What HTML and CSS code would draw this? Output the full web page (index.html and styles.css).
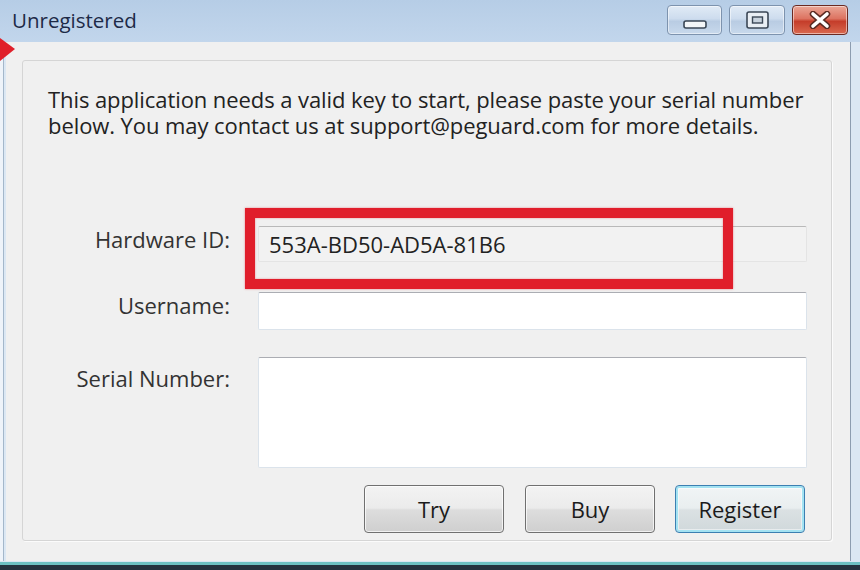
FILE: index.html
```html
<!DOCTYPE html>
<html lang="en">
<head>
  <meta charset="UTF-8">
  <meta name="viewport" content="width=device-width, initial-scale=1.0">
  <title>Unregistered</title>
  <link rel="stylesheet" href="styles.css">
</head>
<body>
  <div class="window">
    <div class="titlebar">
      <span class="title">Unregistered</span>
      <div class="caption-buttons">
        <button class="cap-btn min" aria-label="Minimize">
          <svg width="24" height="9" viewBox="0 0 24 9"><rect x="1" y="1" width="22" height="7" rx="2" fill="#f4f6f8" stroke="#3b4756" stroke-width="1.6"/></svg>
        </button>
        <button class="cap-btn max" aria-label="Maximize">
          <svg width="23" height="18" viewBox="0 0 23 18"><rect x="1" y="1" width="21" height="16" rx="2" fill="#e9eef4" stroke="#3b4756" stroke-width="1.6"/><rect x="6.5" y="6" width="10" height="6" fill="#c9d3de" stroke="#3b4756" stroke-width="1.4"/></svg>
        </button>
        <button class="cap-btn close" aria-label="Close">
          <svg width="22" height="18" viewBox="0 0 22 18"><path d="M4 3 L18 15 M18 3 L4 15" stroke="#5a2a22" stroke-width="6.5" stroke-linecap="round"/><path d="M4 3 L18 15 M18 3 L4 15" stroke="#ffffff" stroke-width="3.6" stroke-linecap="round"/></svg>
        </button>
      </div>
    </div>

    <div class="frame">
      <div class="client">
        <div class="panel">
          <p class="message">This application needs a valid key to start, please paste your serial number below. You may contact us at support@peguard.com for more details.</p>

          <div class="form">
            <div class="row">
              <label class="label">Hardware ID:</label>
              <div class="field readonly">553A-BD50-AD5A-81B6</div>
            </div>
            <div class="row">
              <label class="label" for="username">Username:</label>
              <input class="field input" id="username" type="text">
            </div>
            <div class="row">
              <label class="label serial-label" for="serial">Serial Number:</label>
              <textarea class="field serial" id="serial"></textarea>
            </div>
          </div>

          <div class="actions">
            <button class="btn btn-try">Try</button>
            <button class="btn">Buy</button>
            <button class="btn default">Register</button>
          </div>
        </div>
      </div>
    </div>
    <div class="frame-bottom"></div>

    <!-- annotation drawn over the screenshot -->
    <div class="highlight"></div>
    <svg class="arrow" width="16" height="24" viewBox="0 0 16 24"><path d="M0 0 L15 11 L0 23 Z" fill="#e0202a"/></svg>
  </div>
</body>
</html>
```

FILE: styles.css
```css
body {
  margin: 0;
  padding: 0;
  font-family: "Open Sans", "Noto Sans", sans-serif;
  color: #222;
}

.window {
  position: relative;
  width: 860px;
  height: 570px;
  display: flex;
  flex-direction: column;
  background: #d6e4f2;
  overflow: hidden;
}

.titlebar {
  height: 42px;
  flex: none;
  display: flex;
  justify-content: space-between;
  align-items: flex-start;
  padding: 0 12px;
  background: linear-gradient(#b6cde6, #c2d6ec);
}

.title {
  font-size: 20.5px;
  line-height: 26px;
  margin-top: 7px;
  color: #1d2a47;
}

.caption-buttons {
  display: flex;
  gap: 7px;
  margin-top: 5px;
}

.cap-btn {
  width: 56px;
  height: 30px;
  padding: 0;
  border: 1px solid #7d93ae;
  border-radius: 4px;
  display: flex;
  justify-content: center;
  align-items: center;
  background: linear-gradient(#e1ebf6 0%, #cddcee 45%, #b9cce3 55%, #c8d9ec 100%);
  box-shadow: inset 0 0 0 1px rgba(255, 255, 255, 0.5);
}

.cap-btn.min {
  width: 55px;
  padding-top: 8px;
}

.cap-btn.close {
  border-color: #6b2a22;
  background: linear-gradient(#eaa797 0%, #dd7361 45%, #c53d2a 55%, #d9694f 100%);
}

.frame {
  flex: 1;
  display: flex;
  padding: 0 9px 0 6px;
  background: linear-gradient(to right, #eef3f9 0, #eef3f9 3px, #a4b7ca 3px, #a4b7ca 4px, #dbe7f3 4px);
}

.client {
  flex: 1;
  background: #f0f0f0;
  padding: 18px 18px 20px 16px;
  border-right: 1px solid #8d9db0;
}

.panel {
  height: 100%;
  box-sizing: border-box;
  border: 1px solid #d5d5d5;
  border-radius: 3px;
  box-shadow: 1px 1px 0 #fbfbfb;
  padding: 25px 24px 7px 25px;
  display: flex;
  flex-direction: column;
}

.message {
  margin: 0;
  font-size: 22px;
  line-height: 26px;
  letter-spacing: -0.08px;
  color: #222;
}

.form {
  margin-top: 88px;
  display: flex;
  flex-direction: column;
  gap: 30px;
}

.row {
  display: flex;
  gap: 28px;
  align-items: flex-start;
}

.row:last-child {
  margin-top: -3px;
}

.label {
  width: 182px;
  flex: none;
  text-align: right;
  font-size: 22px;
  line-height: 26px;
  color: #333;
}

.serial-label {
  padding-top: 8px;
}

.field {
  flex: 1;
  box-sizing: border-box;
  margin: 0;
  border: 1px solid #dbe3eb;
  border-top-color: #abadb3;
  border-radius: 2px;
  background: #fff;
  font-family: inherit;
  font-size: 22px;
  color: #222;
}

.readonly {
  height: 36px;
  display: flex;
  align-items: center;
  padding-left: 10px;
  background: #f2f2f2;
  border-color: #e4e4e4;
  border-top-color: #b9b9b9;
}

.input {
  height: 38px;
}

.serial {
  height: 111px;
  resize: none;
}

.actions {
  margin-top: 17px;
  padding-right: 2px;
  display: flex;
  justify-content: flex-end;
  gap: 20px;
}

.btn {
  width: 130px;
  height: 48px;
  border: 1px solid #707070;
  border-radius: 4px;
  background: linear-gradient(#f3f3f3 0%, #ebebeb 48%, #dddddd 52%, #cfcfcf 100%);
  box-shadow: inset 0 0 0 1px rgba(255, 255, 255, 0.7);
  font-family: inherit;
  font-size: 22px;
  color: #1b1b1b;
  padding: 0;
}

.btn-try {
  width: 140px;
  margin-right: 1px;
}

.btn.default {
  border-color: #3c7fb1;
  box-shadow: inset 0 0 0 2px #a3e2f2, inset 0 0 0 3px rgba(255, 255, 255, 0.5);
  background: linear-gradient(#f1f5f6 0%, #e9eeef 48%, #dbe1e3 52%, #d0d8db 100%);
}

.frame-bottom {
  height: 9px;
  flex: none;
  background: linear-gradient(#dbe7f3 0, #dbe7f3 1px, #6cc0c2 1px, #6cc0c2 4px, #24323e 4px);
}

.highlight {
  position: absolute;
  left: 245px;
  top: 208px;
  width: 488px;
  height: 81px;
  box-sizing: border-box;
  border: 10px solid #e01e2b;
  box-shadow: 0 0 2px rgba(224, 30, 43, 0.5), inset 0 0 2px rgba(224, 30, 43, 0.5);
}

.arrow {
  position: absolute;
  left: 0;
  top: 38px;
}
```
